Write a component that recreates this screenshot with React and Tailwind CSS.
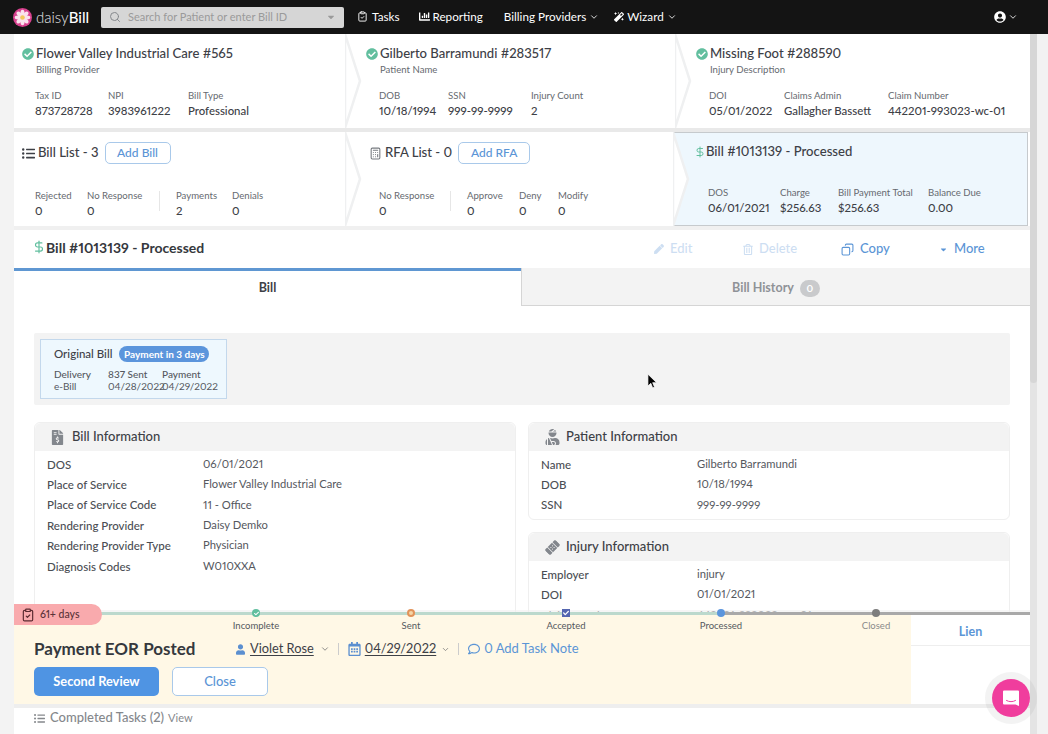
import {
  FaCheckCircle,
  FaChartBar,
  FaMagic,
  FaUserCircle,
  FaListUl,
  FaPen,
  FaRegTrashAlt,
  FaCaretDown,
  FaFileInvoiceDollar,
  FaUserInjured,
  FaBandAid,
  FaUser,
  FaRegCalendarAlt,
  FaRegComment,
  FaCheck,
} from 'react-icons/fa'
import { Calculator, ChevronDown, ClipboardCheck, Copy, DollarSign, Search } from 'lucide-react'

const Stat = ({ label, value, className = '' }) => (
  <div className={className}>
    <div className="text-[9.6px] leading-[14px] text-[#666a70] whitespace-nowrap">{label}</div>
    <div className="text-[11.4px] leading-4 font-medium text-[#3d4046] whitespace-nowrap">{value}</div>
  </div>
)

// white arrow that separates the breadcrumb cards
const Chevron = () => (
  <svg
    className="absolute top-0 right-[-16px] z-10 h-full w-[17px]"
    viewBox="0 0 17 94"
    preserveAspectRatio="none"
  >
    <polygon points="0,0 15,47 0,94" fill="#fff" stroke="#eff0f1" strokeWidth="2.5" />
  </svg>
)

const Check = () => <FaCheckCircle className="w-3 h-3 text-[#62bf9f] shrink-0" />

function HeaderCard({ title, sub, stats, className, statsClass, arrow = true }) {
  return (
    <div className={`relative bg-white pt-[11px] ${className}`}>
      <div className="flex items-center gap-[2px] h-[18px]">
        <Check />
        <span className="text-[13.1px] font-medium text-[#3d4046] whitespace-nowrap">{title}</span>
      </div>
      <div className="pl-[14px] text-[9.6px] leading-[14px] text-[#666a70]">{sub}</div>
      <div className={`flex mt-3 ${statsClass}`}>
        {stats.map((s) => (
          <Stat key={s.label} label={s.label} value={s.value} className={s.w} />
        ))}
      </div>
      {arrow && <Chevron />}
    </div>
  )
}

const AddButton = ({ children, className }) => (
  <button className={`h-[22px] rounded-[5px] border border-[#a9c9ea] bg-white text-[12px] font-medium text-[#5b95d6] ${className}`}>
    {children}
  </button>
)

const Divider = () => <div className="w-px h-5 mt-[2px] bg-[#e6e6e6]" />

function InfoCard({ icon, title, rows, className = '' }) {
  return (
    <div className={`rounded-md border border-[#efefef] bg-white ${className}`}>
      <div className="flex items-center h-[28px] rounded-t-md bg-[#f3f3f3] pl-[16px]">
        <span className="w-[21px] flex justify-start text-[#83878d]">{icon}</span>
        <span className="text-[13px] font-medium text-[#3d4046]">{title}</span>
      </div>
      <div className="pt-[3px] pb-1">
        {rows.map(([k, v]) => (
          <div key={k} className="flex h-[20.4px] items-center text-[11.5px] pl-3">
            <span className="w-[156px] font-medium text-[#4b4e54]">{k}</span>
            <span className="text-[11.2px] text-[#55585e]">{v}</span>
          </div>
        ))}
      </div>
    </div>
  )
}

function Step({ label, dot, className = '', labelClass = 'text-[#55585e]' }) {
  return (
    <div className={`flex flex-col items-center w-[110px] ${className}`}>
      <div className="h-3 flex items-center justify-center">{dot}</div>
      <div className={`text-[9.5px] leading-[14px] ${labelClass}`}>{label}</div>
    </div>
  )
}

function Logo() {
  const petals = [0, 45, 90, 135, 180, 225, 270, 315]
  return (
    <svg viewBox="0 0 20 20" className="w-[19px] h-[19px] shrink-0">
      <circle cx="10" cy="10" r="10" fill="#d9418f" />
      {petals.map((a) => (
        <ellipse key={a} cx="10" cy="5.2" rx="2.1" ry="3.4" fill="#fbe3ee" transform={`rotate(${a} 10 10)`} />
      ))}
      <circle cx="10" cy="10" r="2.4" fill="#f4c95d" />
    </svg>
  )
}

export default function App() {
  return (
    <div
      className="relative w-[1048px] h-[734px] overflow-hidden bg-white text-[#3d4046] proportional-nums"
      style={{ fontFamily: 'Lato, "Noto Sans", sans-serif' }}
    >
      {/* Top nav */}
      <nav className="flex items-center h-[34px] bg-[#141414] text-white text-[11.7px] pl-[13px]">
        <Logo />
        <span className="ml-[4px] text-[15px] font-light text-[#e8e8e8]">daisy</span>
        <span className="text-[15px] font-medium">Bill</span>
        <div className="flex items-center ml-[12px] w-[243px] h-[21px] rounded-[2px] bg-[#d6d6d6] pl-2 pr-2 text-[#9a9a9a]">
          <Search className="w-3 h-3 text-[#85888c]" />
          <span className="ml-[7px] text-[11px]">Search for Patient or enter Bill ID</span>
          <FaCaretDown className="ml-auto w-[10px] h-[10px] text-[#9a9a9a]" />
        </div>
        <div className="flex items-center ml-[13px] gap-[4px]">
          <ClipboardCheck className="w-[11px] h-[11px]" />
          <span>Tasks</span>
        </div>
        <div className="flex items-center ml-[19px] gap-[3px]">
          <FaChartBar className="w-[11px] h-[11px]" />
          <span>Reporting</span>
        </div>
        <div className="flex items-center ml-[21px] gap-[3px]">
          <span>Billing Providers</span>
          <ChevronDown className="w-[10px] h-[10px]" />
        </div>
        <div className="flex items-center ml-[15px] gap-[3px]">
          <FaMagic className="w-[10px] h-[10px]" />
          <span>Wizard</span>
          <ChevronDown className="w-[10px] h-[10px]" />
        </div>
        <div className="flex items-center ml-auto mr-[30px] gap-[2px]">
          <FaUserCircle className="w-3 h-3" />
          <ChevronDown className="w-[10px] h-[10px]" />
        </div>
      </nav>

      <div className="flex h-[700px]">
        <div className="w-[14px] bg-[#f3f3f3] shrink-0" />

        <main className="w-[1016px] shrink-0 bg-white">
          {/* Claim summary */}
          <div className="flex h-[94px]">
            <HeaderCard
              className="w-[332px] z-30 pl-2"
              statsClass="pl-[13px]"
              title="Flower Valley Industrial Care #565"
              sub="Billing Provider"
              stats={[
                { label: 'Tax ID', value: '873728728', w: 'w-[73px]' },
                { label: 'NPI', value: '3983961222', w: 'w-[80px]' },
                { label: 'Bill Type', value: 'Professional' },
              ]}
            />
            <HeaderCard
              className="w-[330px] z-20 pl-5"
              statsClass="pl-[13px]"
              title="Gilberto Barramundi #283517"
              sub="Patient Name"
              stats={[
                { label: 'DOB', value: '10/18/1994', w: 'w-[69px]' },
                { label: 'SSN', value: '999-99-9999', w: 'w-[83px]' },
                { label: 'Injury Count', value: '2' },
              ]}
            />
            <HeaderCard
              className="flex-1 pl-5"
              arrow={false}
              statsClass="pl-[13px]"
              title="Missing Foot #288590"
              sub="Injury Description"
              stats={[
                { label: 'DOI', value: '05/01/2022', w: 'w-[75px]' },
                { label: 'Claims Admin', value: 'Gallagher Bassett', w: 'w-[104px]' },
                { label: 'Claim Number', value: '442201-993023-wc-01' },
              ]}
            />
          </div>
          <div className="h-1 bg-[#e9e9e9]" />

          {/* Bill / RFA breadcrumbs */}
          <div className="flex h-[94px]">
            <div className="relative w-[332px] z-30 bg-white pt-[10px] pl-2">
              <div className="flex items-center h-[22px]">
                <FaListUl className="w-[13px] h-[13px] text-[#3d4046]" />
                <span className="ml-[3px] text-[13.1px] font-medium">Bill List - 3</span>
                <AddButton className="ml-[6px] w-[66px]">Add Bill</AddButton>
              </div>
              <div className="flex mt-[25px] pl-[13px]">
                <Stat label="Rejected" value="0" className="w-[52px]" />
                <Stat label="No Response" value="0" className="w-[72px]" />
                <Divider />
                <Stat label="Payments" value="2" className="w-[56px] ml-[16px]" />
                <Stat label="Denials" value="0" />
              </div>
              <Chevron />
            </div>
            <div className="relative w-[328px] z-20 bg-white pt-[10px] pl-[23px]">
              <div className="flex items-center h-[22px]">
                <Calculator className="w-[13px] h-[13px] text-[#777b80]" />
                <span className="ml-[3px] text-[13.1px] font-medium">RFA List - 0</span>
                <AddButton className="ml-[6px] w-[72px]">Add RFA</AddButton>
              </div>
              <div className="flex mt-[25px] pl-[10px]">
                <Stat label="No Response" value="0" className="w-[71px]" />
                <Divider />
                <Stat label="Approve" value="0" className="w-[52px] ml-[16px]" />
                <Stat label="Deny" value="0" className="w-[39px]" />
                <Stat label="Modify" value="0" />
              </div>
              <Chevron />
            </div>
            <div className="flex-1 mr-[2px] border border-l-0 border-[#c6cacd] bg-[#eef7fd] pl-5 pt-[10px]">
              <div className="flex items-center h-[18px]">
                <DollarSign className="w-[12px] h-[16px] text-[#62bf9f]" />
                <span className="text-[13.1px] font-medium">Bill #1013139 - Processed</span>
              </div>
              <div className="flex mt-[25px] pl-[14px]">
                <Stat label="DOS" value="06/01/2021" className="w-[72px]" />
                <Stat label="Charge" value="$256.63" className="w-[58px]" />
                <Stat label="Bill Payment Total" value="$256.63" className="w-[90px]" />
                <Stat label="Balance Due" value="0.00" />
              </div>
            </div>
          </div>

          {/* Bill title and actions */}
          <div className="flex items-center h-[42px] border-t-[4px] border-[#f0f0f0] pl-[18px]">
            <div className="flex items-center mb-1">
              <DollarSign className="w-[14px] h-[18px] text-[#62bf9f]" />
              <span className="text-[14px] font-bold text-[#35383d] w-[170px] whitespace-nowrap">Bill #1013139 - Processed</span>
            </div>
            <div className="flex items-center ml-[438px] text-[13px] font-medium text-[#5b95d6]">
              <div className="flex items-center gap-[6px] w-[89px] opacity-30">
                <FaPen className="w-[10px] h-[10px]" />
                <span>Edit</span>
              </div>
              <div className="flex items-center gap-[6px] w-[98px] opacity-30">
                <FaRegTrashAlt className="w-[10px] h-[11px]" />
                <span>Delete</span>
              </div>
              <div className="flex items-center gap-[6px] w-[98px]">
                <Copy className="w-[13px] h-[13px] -scale-x-100" />
                <span>Copy</span>
              </div>
              <div className="flex items-center gap-[6px]">
                <FaCaretDown className="w-[9px] h-[9px]" />
                <span>More</span>
              </div>
            </div>
          </div>

          {/* Tabs */}
          <div className="flex h-[38px]">
            <div className="flex items-center justify-center w-[507px] border-t-[3px] border-[#5f97d2] text-[12.5px] font-bold text-[#3d4046]">
              Bill
            </div>
            <div className="flex flex-1 items-center justify-center gap-[6px] pt-1 border-l border-b border-[#d5d5d5] bg-[#f3f3f3] text-[12.5px] font-bold text-[#8f9297]">
              <span>Bill History</span>
              <span className="flex items-center justify-center w-5 h-[17px] rounded-full bg-[#c9cacc] text-[10px] text-white">0</span>
            </div>
          </div>

          {/* Tab body */}
          <div className="px-5 pt-[27px]">
            <div className="h-[72px] rounded-[2px] bg-[#f3f3f3] p-[6px]">
              <div className="w-[187px] h-[60px] border border-[#c3d8ec] bg-[#eef8fe] pl-[13px] pt-[6px]">
                <div className="flex items-center h-4">
                  <span className="text-[11.5px] font-medium">Original Bill</span>
                  <span className="ml-[7px] flex items-center justify-center w-[90px] h-4 rounded-full bg-[#5b95dc] text-[10px] font-bold text-white">
                    Payment in 3 days
                  </span>
                </div>
                <div className="grid grid-cols-[54px_54px_54px] mt-[6px] text-[10px] leading-3 text-[#55585e]">
                  <span className="font-medium">Delivery</span>
                  <span className="font-medium">837 Sent</span>
                  <span className="font-medium">Payment</span>
                  <span>e-Bill</span>
                  <span>04/28/2022</span>
                  <span>04/29/2022</span>
                </div>
              </div>
            </div>

            <div className="flex gap-3 mt-[17px]">
              <InfoCard
                className="w-[482px] h-[220px]"
                icon={<FaFileInvoiceDollar className="w-[13px] h-[15px]" />}
                title="Bill Information"
                rows={[
                  ['DOS', '06/01/2021'],
                  ['Place of Service', 'Flower Valley Industrial Care'],
                  ['Place of Service Code', '11 - Office'],
                  ['Rendering Provider', 'Daisy Demko'],
                  ['Rendering Provider Type', 'Physician'],
                  ['Diagnosis Codes', 'W010XXA'],
                ]}
              />
              <div className="flex-1 flex flex-col gap-3">
                <InfoCard
                  icon={<FaUserInjured className="w-[15px] h-[16px]" />}
                  title="Patient Information"
                  rows={[
                    ['Name', 'Gilberto Barramundi'],
                    ['DOB', '10/18/1994'],
                    ['SSN', '999-99-9999'],
                  ]}
                />
                <InfoCard
                  icon={<FaBandAid className="w-[15px] h-[15px] -rotate-45" />}
                  title="Injury Information"
                  rows={[
                    ['Employer', 'injury'],
                    ['DOI', '01/01/2021'],
                    ['Claim Number', '442201-993023-wc-01'],
                  ]}
                />
              </div>
            </div>
          </div>
        </main>

        {/* Page scrollbar */}
        <div className="flex-1 bg-[#f2f2f2]">
          <div className="w-[7px] h-full bg-[#e4e4e4]">
            <div className="h-[349px] rounded-b-sm bg-[#d6d6d6]" />
          </div>
        </div>
      </div>

      {/* Task drawer docked over the bottom of the page */}
      <div className="absolute left-[14px] bottom-0 w-[1016px] h-[124px] z-40">
        <div className="h-[2px] bg-[#f0f0f0]/60" />
        <div className="flex h-[3px]">
          <div className="w-[706px] bg-[#bcd9cd]" />
          <div className="flex-1 bg-[#a9a9a9]" />
        </div>
        <div className="flex h-[89px]">
          <div className="w-[897px] bg-[#fff8e6] pl-5 pt-[22px]">
            <div className="flex items-center h-[24px]">
              <span className="text-[17px] font-bold text-[#35383d] w-[202px]">Payment EOR Posted</span>
              <FaUser className="w-[9px] h-[11px] text-[#5b8fd0]" />
              <span className="ml-[5px] text-[12.8px] underline underline-offset-2">Violet Rose</span>
              <ChevronDown className="ml-[6px] w-[10px] h-[10px] text-[#777]" />
              <div className="ml-[8px] w-px h-3 bg-[#ccc]" />
              <FaRegCalendarAlt className="ml-[9px] w-[13px] h-[14px] text-[#5b8fd0]" />
              <span className="ml-[4px] text-[12.8px] underline underline-offset-2">04/29/2022</span>
              <ChevronDown className="ml-[5px] w-[9px] h-[9px] text-[#777]" />
              <div className="ml-[8px] w-px h-3 bg-[#ccc]" />
              <FaRegComment className="ml-[9px] w-[12px] h-[12px] text-[#5b95d6]" />
              <span className="ml-[4px] text-[13px] text-[#5b95d6]">0 Add Task Note</span>
            </div>
            <div className="flex gap-[13px] mt-[6px]">
              <button className="w-[125px] h-[29px] rounded-[5px] bg-[#4f94e3] text-[12.8px] font-bold text-white">
                Second Review
              </button>
              <button className="w-[96px] h-[29px] rounded-[5px] border border-[#a9c9ea] bg-white text-[13px] font-medium text-[#5b95d6]">
                Close
              </button>
            </div>
          </div>
          <div className="flex-1 bg-white">
            <div className="flex items-center justify-center h-[31px] pt-1 border-b border-[#eee] text-[12.5px] font-bold text-[#5b95d6]">
              Lien
            </div>
          </div>
        </div>
        <div className="h-1 bg-[#eeeeee]" />
        <div className="flex items-center h-[26px] pl-5 bg-white pb-[6px] text-[#85888c]">
          <FaListUl className="w-[11px] h-[11px]" />
          <span className="ml-[5px] text-[13px] font-medium">Completed Tasks (2)</span>
          <span className="ml-[4px] text-[11px]">View</span>
        </div>

        {/* Status tracker */}
        <div className="absolute left-0 top-[-3px] flex w-full pl-[187px]">
          <Step
            label="Incomplete"
            dot={<span className="flex items-center justify-center w-2 h-2 rounded-full bg-[#62bf9f]"><FaCheck className="w-[5px] h-[5px] text-white" /></span>}
          />
          <Step
            className="ml-[45px]"
            label="Sent"
            dot={<span className="w-2 h-2 rounded-full bg-[#f5d6a8] border-2 border-[#e2935a]" />}
          />
          <Step
            className="ml-[45px]"
            label="Accepted"
            dot={<span className="flex items-center justify-center w-2 h-2 bg-[#5566b0]"><FaCheck className="w-[6px] h-[6px] text-white" /></span>}
          />
          <Step
            className="ml-[45px]"
            label="Processed"
            dot={<span className="w-2 h-2 rounded-full bg-[#5b95dc]" />}
          />
          <Step
            className="ml-[45px]"
            label="Closed"
            labelClass="text-[#8a8a8a]"
            dot={<span className="w-2 h-2 rounded-full bg-[#7d7d7d]" />}
          />
        </div>

        {/* Age pill */}
        <div className="absolute left-0 top-[-6px] flex items-center w-[88px] h-[21px] rounded-r-full bg-[#f9aaad] pl-[7px]">
          <ClipboardCheck className="w-[14px] h-[14px] text-[#5a2a30]" />
          <span className="ml-[5px] text-[10.5px] font-medium text-[#5a3338]">61+ days</span>
        </div>
      </div>

      {/* Chat launcher */}
      <div className="absolute right-[18px] bottom-[17px] z-50 flex items-center justify-center w-[38px] h-[38px] rounded-full bg-[#f03d9d] ring-[7px] ring-[#8a8a8a]/10">
        <svg viewBox="0 0 20 20" className="w-[20px] h-[20px]">
          <path d="M3 2.5h14a1 1 0 0 1 1 1v14.5l-3.5-1.6H3a1 1 0 0 1-1-1v-12a1 1 0 0 1 1-1z" fill="#fff" />
          <path d="M5.5 12.5c2.8 1.6 6.2 1.6 9 0" fill="none" stroke="#f03d9d" strokeWidth="1" strokeLinecap="round" />
        </svg>
      </div>

      {/* Mouse pointer */}
      <svg viewBox="0 0 12 18" className="absolute left-[647px] top-[373px] w-[11px] h-[17px] z-50">
        <path d="M1 1v13l3.2-3 2 5 2-.9-2-4.8h4.3z" fill="#000" stroke="#fff" strokeWidth="0.8" />
      </svg>
    </div>
  )
}
